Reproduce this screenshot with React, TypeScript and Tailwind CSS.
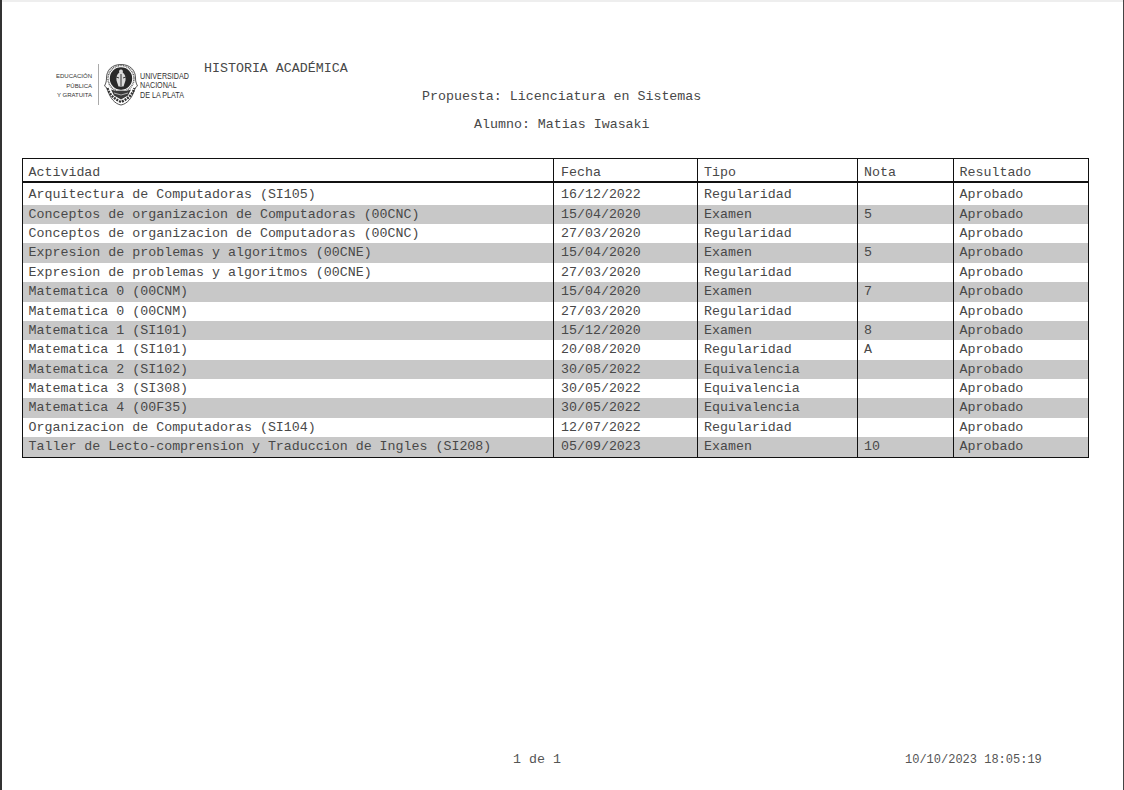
const rows = [
  ["Arquitectura de Computadoras (SI105)", "16/12/2022", "Regularidad", "", "Aprobado"],
  ["Conceptos de organizacion de Computadoras (00CNC)", "15/04/2020", "Examen", "5", "Aprobado"],
  ["Conceptos de organizacion de Computadoras (00CNC)", "27/03/2020", "Regularidad", "", "Aprobado"],
  ["Expresion de problemas y algoritmos (00CNE)", "15/04/2020", "Examen", "5", "Aprobado"],
  ["Expresion de problemas y algoritmos (00CNE)", "27/03/2020", "Regularidad", "", "Aprobado"],
  ["Matematica 0 (00CNM)", "15/04/2020", "Examen", "7", "Aprobado"],
  ["Matematica 0 (00CNM)", "27/03/2020", "Regularidad", "", "Aprobado"],
  ["Matematica 1 (SI101)", "15/12/2020", "Examen", "8", "Aprobado"],
  ["Matematica 1 (SI101)", "20/08/2020", "Regularidad", "A", "Aprobado"],
  ["Matematica 2 (SI102)", "30/05/2022", "Equivalencia", "", "Aprobado"],
  ["Matematica 3 (SI308)", "30/05/2022", "Equivalencia", "", "Aprobado"],
  ["Matematica 4 (00F35)", "30/05/2022", "Equivalencia", "", "Aprobado"],
  ["Organizacion de Computadoras (SI104)", "12/07/2022", "Regularidad", "", "Aprobado"],
  ["Taller de Lecto-comprension y Traduccion de Ingles (SI208)", "05/09/2023", "Examen", "10", "Aprobado"],
];

const columns = ["Actividad", "Fecha", "Tipo", "Nota", "Resultado"];
const gridCols = "grid grid-cols-[530px_144px_160px_96px_135px]";
const cellPad = ["pl-[5.500px]", "pl-[7px]", "pl-[6px]", "pl-[6px]", "pl-[5.500px]"];

function Seal() {
  return (
    <svg width="34" height="42" viewBox="0 0 34 42" className="shrink-0">
      {/* escudo exterior */}
      <path d="M17 .5C8 .5 2.500 6 2.500 14c0 3-.5 5-2 8 2 1 3 3 3.500 5 2 7 7 13 13 14 6-1 11-7 13-14 .5-2 1.500-4 3.500-5-1.500-3-2-5-2-8C31.500 6 26 .5 17 .5z" fill="#fff" stroke="#555" strokeWidth="1" />
      <circle cx="17" cy="14.500" r="13" fill="none" stroke="#666" strokeWidth="1.600" strokeDasharray="1 .7" />
      <circle cx="17" cy="14.500" r="11.200" fill="#2a2a2a" />
      {/* figura central */}
      <path d="M17 5.500c1.700 0 2.300 1.500 1.700 3 2.300 1.500 3.300 4.500 2.800 8l-2 6h-5l-2-6c-.5-3.500.5-6.500 2.800-8-.6-1.500 0-3 1.700-3z" fill="#dcdcdc" />
      <path d="M11 12.500l4 1.500M23 12.500l-4 1.500M17 10v12" stroke="#333" strokeWidth="1" fill="none" />
      {/* laureles */}
      <path d="M3.500 24c2 7 7 11 13.500 14 6.500-3 11.500-7 13.500-14" fill="none" stroke="#333" strokeWidth="2.400" strokeDasharray="2 1" />
      <path d="M7 25.500l5 1.500 5-1.500 5 1.500 5-1.500-3 6-7 4-7-4z" fill="#3a3a3a" />
      <path d="M10 29l7 2 7-2M12 26.500h10" stroke="#ccc" strokeWidth=".8" fill="none" />
    </svg>
  );
}

export default function App() {
  return (
    <div className="flex h-[790px] w-[1124px] flex-col overflow-hidden border-r border-l-2 border-r-[#444] border-l-[#333] bg-white font-['Liberation_Mono',monospace] text-[13.3px] leading-[16px] text-[#484848]">
      <div className="h-[2px] shrink-0 bg-[#eeeeee]" />

      {/* Encabezado */}
      <header className="flex shrink-0 pt-[59px]">
        <div className="ml-[53px] flex h-[48px] w-[149px] shrink-0 items-center whitespace-nowrap font-['Liberation_Sans',sans-serif] text-[#333]">
          <div className="mt-[3px] w-[37px] shrink-0 text-right text-[6px] leading-[9.500px]">
            <div>EDUCACIÓN</div>
            <div>PÚBLICA</div>
            <div>Y GRATUITA</div>
          </div>
          <div className="mx-[6px] mt-[-1px] h-[41px] w-px shrink-0 bg-[#aaa]" />
          <div className="ml-[-1px] mt-[-1px] shrink-0">
            <Seal />
          </div>
          <div className="ml-[2px] mt-[2px] origin-left scale-x-[0.78] text-[9.200px] leading-[9.500px]">
            <div>UNIVERSIDAD</div>
            <div>NACIONAL</div>
            <div>DE LA PLATA</div>
          </div>
        </div>
        <div className="flex flex-col">
          <div className="h-[28px]">HISTORIA ACADÉMICA</div>
          <div className="h-[28px] pl-[218px]">Propuesta: Licenciatura en Sistemas</div>
          <div className="h-[28px] pl-[270px]">Alumno: Matias Iwasaki</div>
        </div>
      </header>

      {/* Tabla */}
      <div className="ml-[20px] mt-[13px] w-[1067px] border-[1.500px] border-[#111]">
        <div className={`${gridCols} h-[24px] border-b-2 border-[#111]`}>
          {columns.map((c, i) => (
            <div key={c} className={`${cellPad[i]} pt-[6px] ${i > 0 ? "border-l-[1.500px] border-[#111]" : ""}`}>
              {c}
            </div>
          ))}
        </div>
        {rows.map((r, i) => (
          <div
            key={i}
            className={`${gridCols} ${i === 0 ? "h-[21.700px]" : "h-[19.380px]"} ${i % 2 === 1 ? "bg-[#c8c8c8]" : "bg-white"}`}
          >
            {r.map((v, j) => (
              <div
                key={j}
                className={`${cellPad[j]} ${i === 0 ? "pt-[4px]" : "pt-[2px]"} ${j > 0 ? "border-l-[1.500px] border-[#111]" : ""}`}
              >
                {v}
              </div>
            ))}
          </div>
        ))}
      </div>

      {/* Pie */}
      <footer className="mt-auto flex pb-[22px] pl-[511px] text-[#555]">
        <div className="w-[392px]">1 de 1</div>
        <div className="text-[12px]">10/10/2023 18:05:19</div>
      </footer>
    </div>
  );
}
